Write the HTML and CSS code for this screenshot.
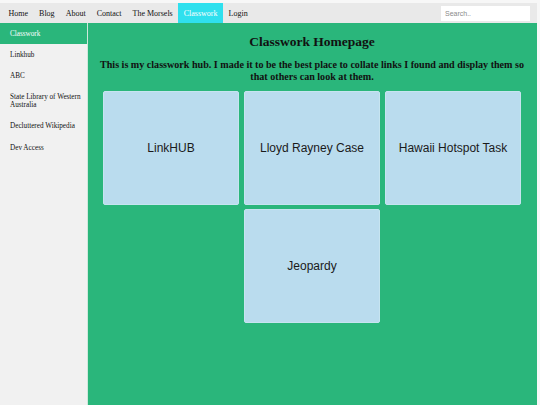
FILE: index.html
```html
<!DOCTYPE html>
<html>
<head>
<meta charset="utf-8">
<link rel="stylesheet" href="styles.css">
</head>
<body>
<div class="page">
  <nav class="topnav">
    <a class="nav-link" href="#">Home</a>
    <a class="nav-link" href="#">Blog</a>
    <a class="nav-link" href="#">About</a>
    <a class="nav-link" href="#">Contact</a>
    <a class="nav-link" href="#">The Morsels</a>
    <a class="nav-link active" href="#">Classwork</a>
    <a class="nav-link" href="#">Login</a>
    <input class="search" type="text" placeholder="Search..">
  </nav>
  <div class="layout">
    <aside class="sidebar">
      <a class="side-link active" href="#">Classwork</a>
      <a class="side-link" href="#">Linkhub</a>
      <a class="side-link" href="#">ABC</a>
      <a class="side-link" href="#">State Library of Western Australia</a>
      <a class="side-link" href="#">Decluttered Wikipedia</a>
      <a class="side-link" href="#">Dev Access</a>
    </aside>
    <main class="main">
      <h1 class="title">Classwork Homepage</h1>
      <p class="intro">This is my classwork hub. I made it to be the best place to collate links I found and display them so that others can look at them.</p>
      <div class="cards">
        <div class="card">LinkHUB</div>
        <div class="card">Lloyd Rayney Case</div>
        <div class="card">Hawaii Hotspot Task</div>
        <div class="card">Jeopardy</div>
      </div>
    </main>
  </div>
</div>
</body>
</html>
```

FILE: styles.css
```css
html, body {
  margin: 0;
  padding: 0;
  height: 100%;
}
body {
  background: #f7f7f7;
  font-family: "Liberation Serif", "Times New Roman", serif;
  color: #111;
}
.page {
  padding-top: 3px;
  padding-right: 3px;
  height: calc(100% - 3px);
  display: flex;
  flex-direction: column;
}
.topnav {
  display: flex;
  align-items: center;
  height: 20px;
  background: #e9e9e9;
  padding-left: 3px;
}
.nav-link {
  display: flex;
  align-items: center;
  height: 20px;
  padding: 0 5.5px;
  font-size: 8px;
  color: #111;
  text-decoration: none;
}
.nav-link.active {
  background: #2fe0ee;
  color: #fff;
}
.search {
  margin-left: auto;
  margin-right: 7px;
  width: 89px;
  height: 15px;
  box-sizing: border-box;
  border: none;
  padding: 0 4px;
  font-family: "Liberation Sans", Arial, sans-serif;
  font-size: 7px;
  background: #fff;
  outline: none;
}
.search::placeholder {
  color: #8a8a8a;
}
.layout {
  flex: 1;
  display: flex;
}
.sidebar {
  width: 87px;
  background: #f1f1f1;
  border-right: 1px solid #cfe8dc;
  display: flex;
  flex-direction: column;
}
.side-link {
  display: block;
  padding: 6.6px 4px 6.6px 10px;
  font-size: 7.2px;
  line-height: 8px;
  color: #111;
  text-decoration: none;
}
.side-link.active {
  background: #2ab67b;
  color: #fff;
}
.main {
  flex: 1;
  background: #2ab67b;
  padding: 0 16px 0 15px;
  text-align: center;
}
.title {
  margin: 10px 0 0;
  font-size: 13.5px;
  line-height: 17px;
  font-weight: bold;
}
.intro {
  margin: 9px -9px 0;
  font-size: 10.1px;
  line-height: 12px;
  font-weight: bold;
}
.cards {
  margin-top: 8px;
  display: flex;
  flex-wrap: wrap;
  justify-content: center;
  gap: 4px 5px;
}
.card {
  width: 136px;
  height: 114px;
  box-sizing: border-box;
  background: #badcee;
  border: 1px solid #c7e4f0;
  border-radius: 2px;
  display: flex;
  align-items: center;
  justify-content: center;
  font-family: "Liberation Sans", Arial, sans-serif;
  font-size: 12px;
  color: #1a1a1a;
}
```
